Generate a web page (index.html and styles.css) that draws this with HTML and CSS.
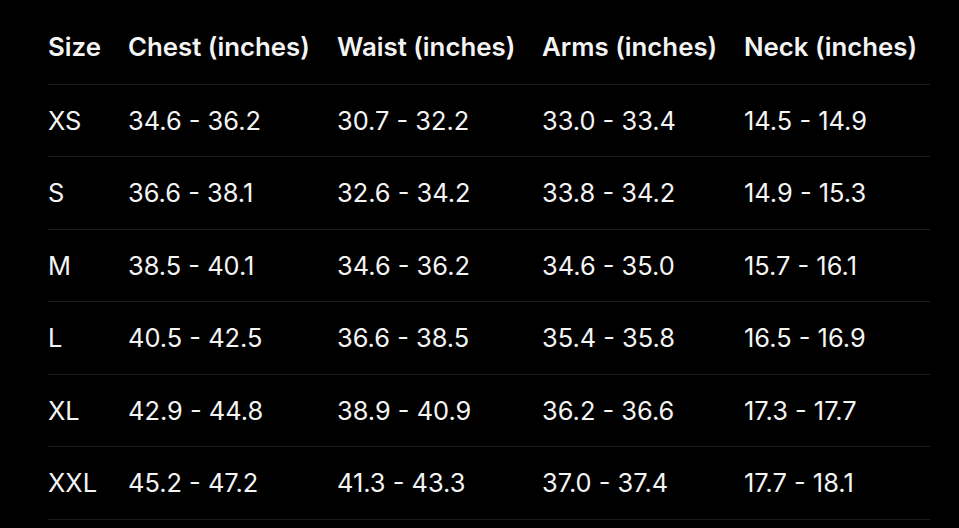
FILE: index.html
```html
<!DOCTYPE html>
<html>
<head>
<meta charset="utf-8">
<link rel="stylesheet" href="styles.css">
</head>
<body>
<div class="chart">
  <div class="row head">
    <div>Size</div><div>Chest (inches)</div><div>Waist (inches)</div><div>Arms (inches)</div><div>Neck (inches)</div>
  </div>
  <div class="row">
    <div>XS</div><div>34.6 - 36.2</div><div>30.7 - 32.2</div><div>33.0 - 33.4</div><div>14.5 - 14.9</div>
  </div>
  <div class="row">
    <div>S</div><div>36.6 - 38.1</div><div>32.6 - 34.2</div><div>33.8 - 34.2</div><div>14.9 - 15.3</div>
  </div>
  <div class="row">
    <div>M</div><div>38.5 - 40.1</div><div>34.6 - 36.2</div><div>34.6 - 35.0</div><div>15.7 - 16.1</div>
  </div>
  <div class="row">
    <div>L</div><div>40.5 - 42.5</div><div>36.6 - 38.5</div><div>35.4 - 35.8</div><div>16.5 - 16.9</div>
  </div>
  <div class="row">
    <div>XL</div><div>42.9 - 44.8</div><div>38.9 - 40.9</div><div>36.2 - 36.6</div><div>17.3 - 17.7</div>
  </div>
  <div class="row">
    <div>XXL</div><div>45.2 - 47.2</div><div>41.3 - 43.3</div><div>37.0 - 37.4</div><div>17.7 - 18.1</div>
  </div>
</div>
</body>
</html>
```
FILE: styles.css
```css
html, body {
  margin: 0;
  padding: 0;
  background: #000;
  height: 100%;
  overflow: hidden;
}
.chart {
  padding: 12px 29px 0 48px;
  font-family: Inter, "Noto Sans", sans-serif;
  color: #f4f4f4;
}
.row {
  display: grid;
  grid-template-columns: 80px 209px 205px 202px 186px;
  height: 72.5px;
  box-sizing: border-box;
  border-bottom: 1px solid #1d1d1d;
  align-items: center;
  font-size: 25.4px;
  font-weight: 400;
  white-space: nowrap;
}
.row.head {
  font-size: 25.8px;
  font-weight: 600;
  padding-bottom: 2px;
}
```
